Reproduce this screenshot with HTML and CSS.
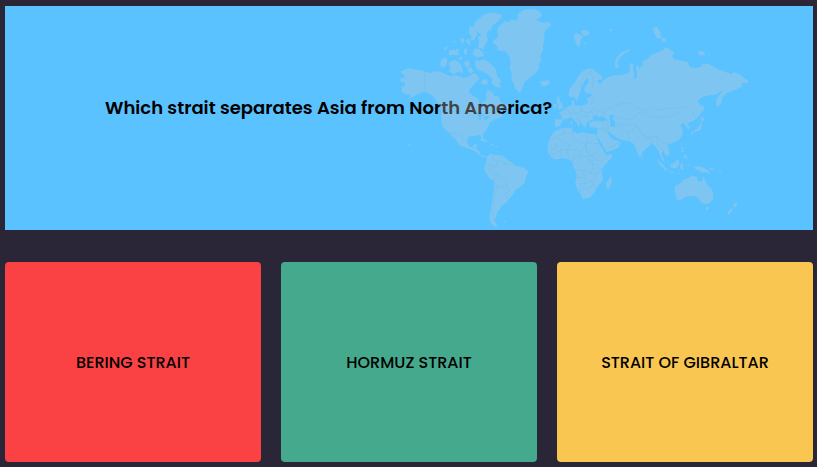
FILE: index.html
```html
<!DOCTYPE html>
<html lang="en">
<head>
<meta charset="utf-8">
<meta name="viewport" content="width=device-width, initial-scale=1">
<title>Geography quiz</title>
<link rel="stylesheet" href="styles.css">
</head>
<body>
<main class="quiz">
  <section class="banner">
    <h1 class="question">Which strait separates Asia from North America?</h1>
    <svg class="map" viewBox="1188 18 1068 672" aria-hidden="true">
      <!-- North America, Arctic islands and Greenland -->
      <g transform="translate(1170 0)">
        <path fill-rule="evenodd" d="M34 212L58 205 72 208 86 210 104 214 118 220 134 214 150 215 165 222 180 228 200 226 222 234 240 228 252 220 262 226 268 238 258 246 250 256 240 266 236 276 246 284 256 292 266 298 268 312 274 316 278 306 290 300 288 284 292 270 308 276 314 290 326 288 330 304 342 314 345 322 330 330 320 336 336 340 338 350 318 357 300 367 290 390 280 400 278 405 282 420 276 418 270 405 250 407 235 411 231 427 238 440 248 441 252 433 262 433 258 443 260 449 268 453 272 465 284 469 290 471 278 472 266 463 250 451 228 443 210 437 200 423 190 409 182 402 194 422 188 416 176 397 170 393 158 380 154 365 154 345 155 335 150 320 142 305 130 290 115 280 104 276 92 278 80 284 66 292 50 302 62 290 60 286 46 282 36 276 34 262 44 258 46 248 34 246 28 238 44 232 44 226 32 218ZM260 346L272 340 282 347 274 350 272 360 266 358 267 350ZM280 352L290 348 302 350 291 357 284 362Z"/>
        <path d="M384 40L406 28 436 28 448 34 456 44 450 53 438 60 460 68 474 66 484 74 466 90 462 104 464 120 458 138 460 150 450 168 455 182 446 192 448 206 430 226 412 238 402 248 396 268 390 278 376 268 372 252 364 238 366 220 360 206 362 180 356 164 346 154 320 150 324 140 306 126 324 110 322 84 344 64 358 66 366 58 382 62Z"/>
        <path d="M254 68L276 48 292 40 310 38 332 42 336 52 324 64 308 76 302 90 292 94 290 108 294 120 286 132 280 148 264 142 268 124 262 114 274 104 258 92 252 82ZM238 82L250 78 258 94 262 104 252 120 242 122 244 108 236 98ZM252 148L266 146 278 156 282 168 262 172 248 164ZM222 146L232 148 230 166 222 160ZM210 116L220 114 224 126 214 130ZM228 120L238 116 242 134 232 132ZM190 122L198 124 192 130ZM162 144L176 134 170 146 164 152ZM176 152L188 148 202 154 206 166 192 164 178 166ZM200 146L208 148 206 156 198 152ZM154 178L166 172 172 182 168 198 158 204 150 194ZM178 186L194 180 206 186 216 200 220 220 204 216 190 222 176 214 184 204 176 196ZM222 188L236 180 240 196 230 204ZM232 206L242 200 250 214 240 224ZM256 178L266 184 280 178 296 186 308 198 318 210 322 230 334 242 328 254 334 264 316 260 304 248 308 238 296 226 282 216 268 212 256 200ZM276 240L288 236 296 248 284 256 272 250ZM206 172L214 170 218 178 208 180ZM450 244L462 244 474 240 480 248 472 256 458 260 452 252ZM338 318L350 310 358 322 350 328 338 326ZM266 418L282 416 296 426 280 424ZM300 430L312 432 306 438ZM48 429L58 433 64 438 56 436ZM316 438L324 438 324 441 316 441Z"/>
        <path class="border" d="M104 214V276L116 280M156 333H244L258 340 280 344 292 340 302 336 318 338M176 398L204 402 218 412 230 422M244 441L258 446"/>
      </g>
      <!-- South America -->
      <g transform="translate(1170 345)">
        <path d="M290 126L300 116 318 120 338 122 352 134 370 146 374 152 400 158 416 170 408 184 404 204 392 214 376 226 368 240 356 252 350 264 336 270 330 282 322 292 318 306 312 316 324 336 312 334 300 320 298 304 304 276 308 246 312 220 312 200 298 188 288 174 282 160 288 146ZM340 318L348 318 346 322 341 322Z"/>
        <path class="border" d="M308 120L308 132 322 140 318 154 304 150 292 146M322 140L338 138 344 148 352 136M344 148L362 146M304 152L298 166 312 174 312 198M312 176L330 184 348 198 350 214 358 226 346 238 352 252M312 198L320 212 316 232 310 262 308 296 312 316M320 212L336 216 350 214"/>
      </g>
      <!-- Europe and Asia -->
      <g transform="translate(1620 0)">
        <path fill-rule="evenodd" d="M86 280L88 268 98 256 108 242 116 228 128 214 146 205 160 208 172 218 186 228 188 238 174 240 172 248 184 252 190 240 204 232 222 226 240 226 262 220 270 214 268 196 274 188 280 192 280 212 284 230 278 240 292 232 288 206 290 194 298 204 308 198 306 186 322 176 336 164 356 156 370 150 374 142 388 146 404 158 396 168 402 178 424 182 444 186 448 200 456 204 484 202 486 192 506 192 530 206 556 216 574 222 582 216 600 224 614 236 626 242 622 250 606 248 604 260 590 268 574 274 556 282 546 296 544 308 534 321 529 316 530 298 540 282 552 268 540 276 526 284 506 286 488 290 472 304 480 314 488 326 485 336 478 348 460 362 442 370 450 382 444 390 438 378 430 370 420 375 428 388 427 405 415 422 395 430 382 435 388 450 388 464 378 468 370 454 365 458 365 470 374 485 368 482 360 465 355 450 345 440 338 430 325 440 310 452 303 470 298 470 288 450 282 432 268 424 245 420 228 412 214 402 200 390 206 404 212 412 222 420 232 421 242 427 236 442 216 452 200 456 190 440 178 420 168 408 172 400 172 386 160 382 150 382 148 368 160 362 182 362 200 364 196 354 184 348 178 352 166 344 160 350 158 358 148 364 140 366 138 384 128 376 120 362 108 352 122 370 114 376 102 358 92 352 80 356 66 364 60 378 46 382 44 370 46 358 66 358 64 346 56 336 68 334 84 320 94 316 96 300 102 302 104 316 120 318 136 314 144 308 140 296 154 288 156 282 140 280 132 272 138 256 146 246 142 232 134 244 124 262 120 280 110 302 102 290 94 292 86 288ZM208 346L222 344 218 356 226 366 224 382 212 380 210 364Z"/>
        <path d="M52 290L60 294 60 304 68 314 70 324 54 330 56 316 50 306ZM42 312L50 312 50 322 42 326ZM102 102L112 100 120 104 130 108 124 116 118 142 110 136 104 118ZM122 92L136 90 148 96 146 104 134 108 126 102ZM132 126L139 128 135 135ZM206 88L218 86 212 95ZM224 190L230 172 244 158 268 146 270 150 252 162 240 172 232 188 236 206 226 202ZM340 84L350 80 360 94 364 114 352 116 342 100ZM364 114L376 114 378 124 368 126ZM474 156L486 152 496 160 492 166 476 164ZM502 162L510 164 506 167ZM484 179L492 181 486 183ZM598 202L606 203 602 205ZM484 316L492 318 492 336 486 328ZM482 350L494 354 490 362 482 362ZM484 364L486 376 482 390 464 396 456 400 454 396 470 388 478 378ZM452 398L458 402 456 408ZM304 470L308 474 308 478 304 478ZM424 428L426 434 422 434ZM110 376L120 376 118 380ZM92 362L96 362 97 374 92 374Z"/>
        <path class="border" d="M124 262L122 246 134 226 152 216 156 208M150 212L160 242 156 274M148 286L158 298 154 314 162 328 184 334 194 346M104 316L100 332 90 346M76 326L88 334 94 352M66 358L80 358M122 318L124 332 112 340 98 340M124 332L142 338 156 334 158 350M112 342L128 350 148 348M142 338L136 350M194 346L196 330 222 318 246 310 270 310 290 322 312 330 334 320 356 330 392 324 418 324 440 320 456 334 466 350M226 354L242 350 258 360 276 356 292 342 304 334M304 334L332 350 376 352 408 344 416 332M224 382L242 370 258 378 276 372 292 378 306 404 330 412 352 408 370 430 384 432M242 370L246 392 262 400 278 390 290 376M204 364L204 386 214 402M172 386L190 388 204 386M182 362L190 372 190 388 M262 400L270 420M306 404L320 418 332 414 336 430M352 408L350 434 364 444 372 456M208 400L190 390M198 446L218 438 236 428"/>
      </g>
      <!-- Africa, South-East Asia and Oceania -->
      <g transform="translate(1620 345)">
        <path d="M44 48L70 38 96 38 98 48 112 56 128 52 148 56 166 58 172 74 184 96 194 114 200 120 218 118 214 130 196 148 184 166 188 188 186 200 172 214 164 232 150 248 128 252 122 240 112 222 106 204 110 182 106 164 98 152 98 140 84 132 66 130 44 134 30 122 22 108 24 86 32 66Z"/>
        <path d="M212 186L216 190 214 204 206 222 200 220 198 208 204 196ZM352 134L360 140 372 152 382 164 380 168 368 158 358 146ZM362 122L368 124 374 138 368 136ZM384 168L402 170 402 173 386 171ZM390 148L402 144 414 132 418 138 416 152 408 160 394 158ZM422 146L432 146 428 152 432 162 424 164 420 156ZM424 96L430 98 428 106 434 112 426 112ZM432 120L440 120 440 132 432 128ZM458 150L466 156 476 154 492 158 504 166 510 178 498 172 486 174 480 168 466 162ZM404 214L420 206 430 194 446 188 456 182 470 186 472 196 484 202 490 184 496 196 502 210 514 222 521 238 518 254 506 266 492 266 482 260 472 246 454 242 436 246 424 254 410 254 408 240 404 228ZM498 276L508 276 504 286 498 284ZM584 262L594 266 590 272 586 278 580 274ZM578 276L576 288 568 298 560 294 570 284ZM506 160L520 160 522 163 510 164ZM534 166L546 174 542 176ZM556 210L562 212 558 213ZM560 192L564 196 561 197ZM595 196H600V199H595ZM576 252L582 256 578 257ZM444 144L448 150 444 152ZM408 174L420 174 418 177ZM274 309H277V311H274Z"/>
        <path class="border" d="M70 38L72 54 50 66 34 72M50 66L72 80 90 92 112 76 98 58 98 48M112 76L138 90 142 84 142 54M142 84L178 86M22 100L46 104 48 84M90 92L82 106 62 104 48 116 30 118M62 104L64 130M82 106L86 132M82 106L106 104 124 108 138 90M106 104L98 140M124 108L118 122 100 136M138 90L140 112 158 122 176 104 184 96M118 122L140 124 158 122 170 136 190 136 200 120M98 150L116 146 122 124M108 164L128 166 136 188 108 188M128 166L150 174 160 160 156 138 166 132M150 174L168 176 184 166M160 148L172 148 184 164M136 188L134 206 122 206 122 240M134 206L152 198 168 186 166 176M134 206L130 222 150 220 162 206 152 198M162 206L166 226M156 140L142 132"/>
      </g>
    </svg>
  </section>
  <div class="answers">
    <button class="answer answer-red" type="button">BERING STRAIT</button>
    <button class="answer answer-green" type="button">HORMUZ STRAIT</button>
    <button class="answer answer-yellow" type="button">STRAIT OF GIBRALTAR</button>
  </div>
</main>
</body>
</html>
```

FILE: styles.css
```css
* {
  box-sizing: border-box;
}

body {
  margin: 0;
  background: #2a2638;
  color: #000;
  font-family: Poppins, Inter, sans-serif;
}

.quiz {
  display: flex;
  flex-direction: column;
  gap: 32px;
  padding: 6px 4px 5px 5px;
}

.banner {
  position: relative;
  min-height: 224px;
  padding: 88px 100px;
  background: #5ac2ff;
  overflow: hidden;
}

.question {
  margin: 0;
  font-size: 18px;
  font-weight: 600;
  line-height: 28px;
}

.map {
  position: absolute;
  top: 0;
  right: 61px;
  height: 100%;
  fill: #ccd0d4;
  opacity: 0.32;
  pointer-events: none;
}

.border {
  fill: none;
  stroke: #a0b8c8;
  stroke-width: 2;
}

.answers {
  display: grid;
  grid-template-columns: repeat(3, 1fr);
  gap: 20px;
}

.answer {
  min-height: 200px;
  padding: 18px 16px 16px;
  border: 0;
  border-radius: 4px;
  color: #000;
  font: inherit;
  font-size: 16px;
  font-weight: 500;
  line-height: 24px;
  cursor: pointer;
}

.answer-red {
  background: #fa4144;
}

.answer-green {
  background: #45aa8d;
}

.answer-yellow {
  background: #f9c751;
}
```
